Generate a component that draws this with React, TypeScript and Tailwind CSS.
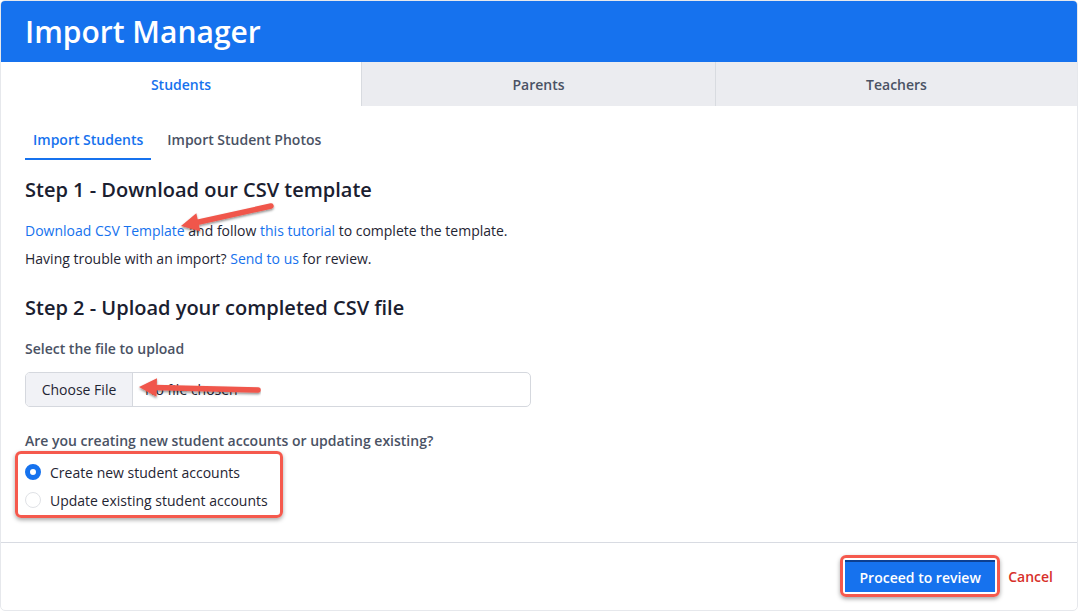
import React from "react";

const font = { fontFamily: '"Open Sans", "Noto Sans", sans-serif' };

function Arrow({ className, x1, y1, x2, y2 }: { className: string; x1: number; y1: number; x2: number; y2: number }) {
    // red annotation arrow, tail (x1,y1) -> tip (x2,y2), local svg coords
    const ang = Math.atan2(y2 - y1, x2 - x1);
    const head = 20;
    const spread = 0.48;
    const bx = x2 - Math.cos(ang) * head * 0.8;
    const by = y2 - Math.sin(ang) * head * 0.8;
    const p1 = `${x2 - Math.cos(ang - spread) * head},${y2 - Math.sin(ang - spread) * head}`;
    const p2 = `${x2 - Math.cos(ang + spread) * head},${y2 - Math.sin(ang + spread) * head}`;
    return (
        <svg className={className} viewBox="0 0 140 50" width="140" height="50">
            <defs>
                <filter id={`sh${x1}${y1}`} x="-20%" y="-50%" width="140%" height="200%">
                    <feDropShadow dx="0" dy="1.5" stdDeviation="1.2" floodColor="#000" floodOpacity="0.45" />
                </filter>
            </defs>
            <g filter={`url(#sh${x1}${y1})`}>
                <line x1={x1} y1={y1} x2={bx} y2={by} stroke="#f0574b" strokeWidth="5.5" strokeLinecap="round" />
                <polygon points={`${x2},${y2} ${p1} ${p2}`} fill="#f0574b" />
            </g>
        </svg>
    );
}

function Radio({ label, checked }: { label: string; checked?: boolean }) {
    return (
        <label className="flex h-[28px] items-center gap-[9px]">
            {checked ? (
                <span className="box-border h-[16px] w-[16px] rounded-full border-[5px] border-[#1672ee] bg-white" />
            ) : (
                <span className="box-border h-[16px] w-[16px] rounded-full border border-[#e0e2e6] bg-white" />
            )}
            <span className="text-[14px] text-[#1f2533]">{label}</span>
        </label>
    );
}

export default function App() {
    return (
        <div className="h-[612px] w-[1078px] bg-white" style={font}>
            <div className="relative flex h-[611px] flex-col overflow-hidden rounded-[5px] border border-[#e6e8ec] bg-white">
                <header className="flex h-[61px] items-center bg-[#1672ee] pl-[24px]">
                    <h1 className="text-[30px] font-semibold leading-none text-white">Import Manager</h1>
                </header>

                <nav className="grid h-[44px] grid-cols-[360px_354px_1fr]">
                    <div className="flex items-center justify-center bg-white text-[14px] font-semibold text-[#1672ee]">Students</div>
                    <div className="border-l border-[#d8dbe0]">
                        <div className="flex h-full items-center justify-center bg-[#ebecf0] text-[14px] font-semibold text-[#4a5264]">Parents</div>
                    </div>
                    <div className="border-l border-[#d8dbe0]">
                        <div className="flex h-full items-center justify-center bg-[#ebecf0] text-[14px] font-semibold text-[#4a5264]">Teachers</div>
                    </div>
                </nav>

                <main className="relative flex-1 px-[24px] pt-[17px]">
                    <div className="flex gap-[8px] text-[14px] font-semibold">
                        <div className="border-b-2 border-[#1672ee] px-[8px] pb-[8px] pt-[6px] text-[#1672ee]">Import Students</div>
                        <div className="px-[8px] pb-[8px] pt-[6px] text-[#4a5264]">Import Student Photos</div>
                    </div>

                    <h2 className="mt-[16px] text-[20px] font-semibold leading-[28px] text-[#1a2030]">Step 1 - Download our CSV template</h2>
                    <p className="mt-[13px] text-[14px] leading-[28px] text-[#1f2533]">
                        <a className="text-[#1672ee]">Download CSV Template</a> and follow{" "}
                        <a className="text-[#1672ee]">this tutorial</a> to complete the template.
                    </p>
                    <p className="text-[14px] leading-[28px] text-[#1f2533]">
                        Having trouble with an import? <a className="text-[#1672ee]">Send to us</a> for review.
                    </p>

                    <h2 className="mt-[21px] text-[20px] font-semibold leading-[28px] text-[#1a2030]">Step 2 - Upload your completed CSV file</h2>
                    <div className="mt-[17px] text-[14px] font-semibold leading-[20px] text-[#4a5264]">Select the file to upload</div>
                    <div className="mt-[13px] flex h-[35px] w-[506px] overflow-hidden rounded-[5px] border border-[#d5d8de]">
                        <div className="flex w-[107px] items-center justify-center border-r border-[#d5d8de] bg-[#f1f2f6] text-[14px] text-[#1f2533]">
                            Choose File
                        </div>
                        <div className="flex items-center pl-[12px] text-[14px] text-[#1f2533]">No file chosen</div>
                    </div>

                    <div className="mt-[24px] text-[14px] font-semibold leading-[20px] text-[#4a5264]">
                        Are you creating new student accounts or updating existing?
                    </div>
                    <div className="mt-[7px] flex flex-col">
                        <Radio label="Create new student accounts" checked />
                        <Radio label="Update existing student accounts" />
                    </div>

                    {/* annotations */}
                    <Arrow className="absolute left-[150px] top-[88px]" x1={120} y1={12} x2={30} y2={32} />
                    <Arrow className="absolute left-[120px] top-[259px]" x1={137} y1={25} x2={18} y2={22} />
                    <div className="absolute left-[14px] top-[345px] h-[67px] w-[268px] rounded-[6px] border-[3px] border-[#f5594d] shadow-[0_2px_4px_rgba(0,0,0,0.35)]" />
                </main>

                <footer className="flex h-[68px] items-start justify-end gap-[8px] border-t border-[#d8dbe2] pr-[24px] pt-[12px]">
                    <div className="rounded-[6px] border-[3px] border-[#f5594d] p-[2px] shadow-[0_2px_4px_rgba(0,0,0,0.35)]">
                        <button className="h-[32px] w-[150px] border-t-2 border-[#0d3f8f] bg-[#1672ee] text-[14px] font-semibold text-white">
                            Proceed to review
                        </button>
                    </div>
                    <button className="mt-[5px] h-[32px] text-[14px] font-semibold text-[#d72f2a]">Cancel</button>
                </footer>
            </div>
        </div>
    );
}
